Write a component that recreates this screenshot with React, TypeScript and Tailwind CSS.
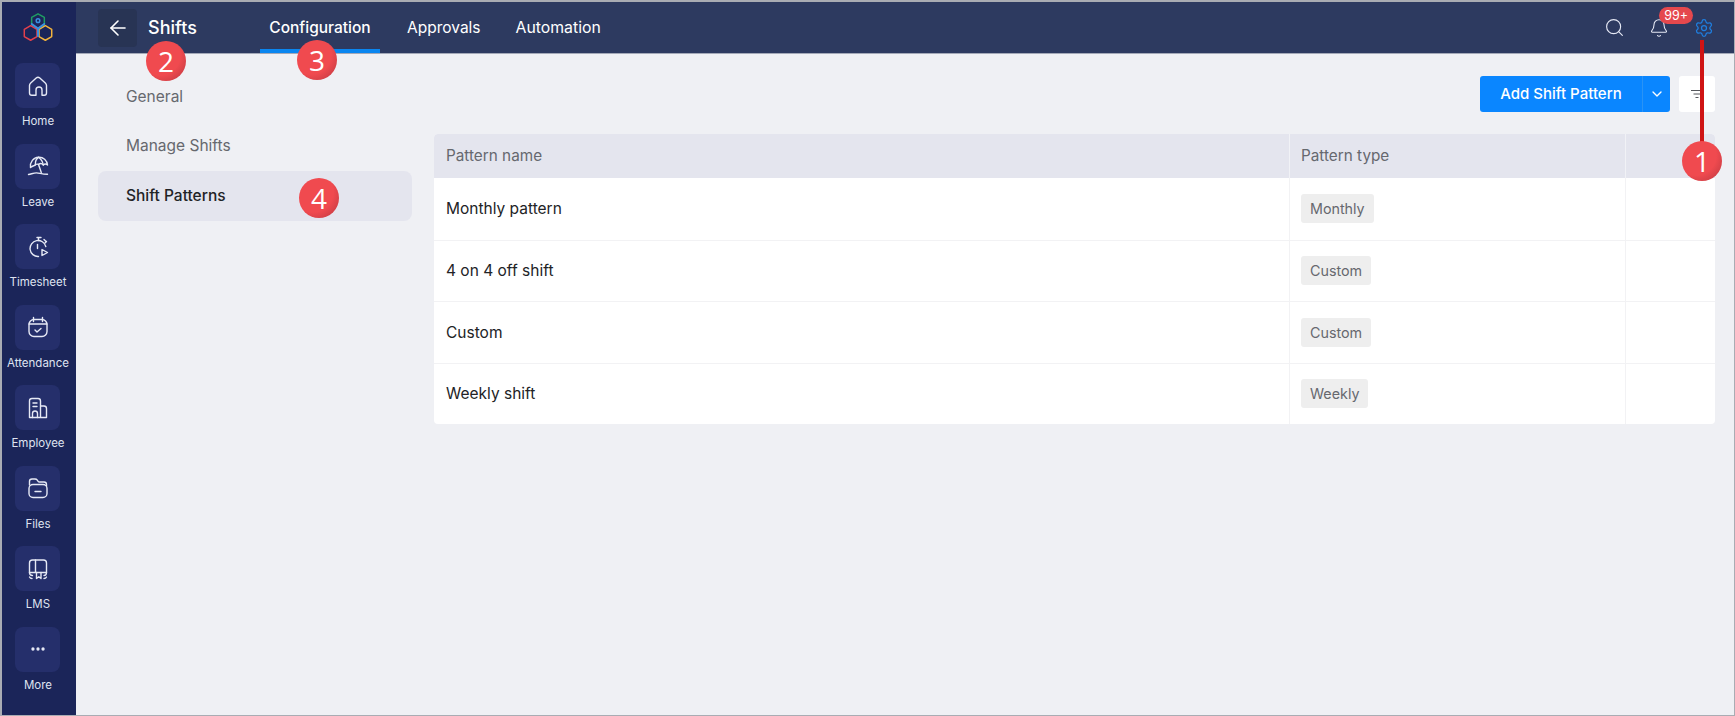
import React from 'react';
import { ArrowLeft, ChevronDown, Search, Bell, Settings } from 'lucide-react';

const font = "font-['Inter','Noto_Sans',sans-serif]";

const Logo = () => (
  <svg width="34" height="34" viewBox="0 0 30 30" fill="none" strokeWidth="1.3" strokeLinejoin="round">
    <path d="M15 2.5l5.6 3.2v6.4L15 15.3l-5.6-3.2V5.700z" stroke="#1f9d63" />
    <path d="M8.500 13l5.600 3.200v6.400l-5.600 3.200-5.600-3.200v-6.400z" stroke="#e5404c" />
    <path d="M21.500 13l5.600 3.200v6.400l-5.600 3.200-5.600-3.200v-6.400z" stroke="#f2b33d" />
    <circle cx="15" cy="8.500" r="1.600" stroke="#3b8fe0" />
    <path d="M9.500 11.500L15 15.500l5.500-4M15 15.500v6.500" stroke="#3b8fe0" strokeWidth="1.800" strokeLinecap="round" />
  </svg>
);

const iconProps = {
  width: 24,
  height: 24,
  viewBox: '0 0 24 24',
  fill: 'none',
  stroke: '#e6e9f5',
  strokeWidth: 1.4,
  strokeLinecap: 'round' as const,
  strokeLinejoin: 'round' as const,
};

const HomeIcon = () => (
  <svg {...iconProps}>
    <path d="M3.500 19V11.500c0-1 .4-1.800 1.200-2.500l5.500-5c1-.9 2.600-.9 3.600 0l5.500 5c.8.7 1.200 1.500 1.200 2.500V19c0 1.400-1 2.300-2.300 2.300h-2.200V16a3 3 0 0 0-6 0v5.300H5.800c-1.300 0-2.300-.9-2.300-2.300z" />
  </svg>
);
const LeaveIcon = () => (
  <svg {...iconProps}>
    <path d="M4.500 13.500C3.800 8 7.500 3.500 12.500 3.200c4.800-.3 8.500 3 9 7.800-1.200-1-3-1.100-4.200 0-1.100-1.300-3.200-1.700-4.700-.6-1.600-.6-3.300-.1-4.300 1.100-1.300.3-2.600 1.100-3.800 2z" />
    <path d="M12.500 3.300c-2.300 1.400-3.400 4.300-3.100 7.800M12.500 10.400l2.800 8M12.500 3.300c2.400 1.700 4.300 4.400 4.800 7.700" />
    <path d="M2.500 20.500c3-.5 5-1.600 8-1.600s5 1.400 11 1.400" />
  </svg>
);
const TimesheetIcon = () => (
  <svg {...iconProps}>
    <path d="M11 2.500h4M12.500 2.500v3M18 4.500l1.800 1.800M19 8l1.500-1.500" />
    <path d="M19.800 11.500a8 8 0 1 0-7.300 10" />
    <path d="M11.500 9.500v4" />
    <path d="M16 14.500v6l5.500-3z" />
  </svg>
);
const AttendanceIcon = () => (
  <svg {...iconProps}>
    <rect x="3" y="4.500" width="18" height="17" rx="5" />
    <path d="M7.500 2.500v4M16.500 2.500v4M3 9h18M9 15l2 2 4-3.500" />
  </svg>
);
const EmployeeIcon = () => (
  <svg {...iconProps}>
    <path d="M3.500 21.500V5c0-1.500 1-2.500 2.500-2.500h6c1.500 0 2.500 1 2.500 2.500v16.500zM14.500 10H18c1.500 0 2.500 1 2.500 2.500v9h-6" />
    <path d="M7 7h4M7 10.500h4M6.500 21.500v-4a2.500 2.500 0 0 1 5 0v4" />
  </svg>
);
const FilesIcon = () => (
  <svg {...iconProps}>
    <path d="M3.500 9V5.500c0-1.500 1-2.500 2.500-2.500h3c1 0 1.700.4 2.300 1.200l.7 1c.4.500.8.800 1.500.800h4.500c1.500 0 2.500 1 2.500 2.500V10" />
    <rect x="3" y="8.500" width="18" height="13" rx="4" />
    <path d="M9 15.500h6" />
  </svg>
);
const LmsIcon = () => (
  <svg {...iconProps}>
    <path d="M6.500 18.500H6a3 3 0 0 1-2.500-3V6c0-2 1.300-3 3-3h11c1.700 0 3 1 3 3v9.500c0 1.500-1 3-2.500 3M3.500 15.500a3 3 0 0 0 3 3" />
    <path d="M9.500 3v12.500M3.500 15.500h17M6 21.500c-1 0-2-.6-2.500-1.500M18 21.500c1 0 2-.6 2.500-1.500" />
    <path d="M10.500 15.500v6l2.300-1.700 2.200 1.700v-6" />
  </svg>
);
const MoreIcon = () => (
  <svg width="22" height="22" viewBox="0 0 24 24" fill="#e6e9f5">
    <circle cx="6.500" cy="12" r="1.800" />
    <circle cx="12" cy="12" r="1.800" />
    <circle cx="17.500" cy="12" r="1.800" />
  </svg>
);

const navItems = [
  { label: 'Home', icon: <HomeIcon /> },
  { label: 'Leave', icon: <LeaveIcon /> },
  { label: 'Timesheet', icon: <TimesheetIcon /> },
  { label: 'Attendance', icon: <AttendanceIcon /> },
  { label: 'Employee', icon: <EmployeeIcon /> },
  { label: 'Files', icon: <FilesIcon /> },
  { label: 'LMS', icon: <LmsIcon /> },
  { label: 'More', icon: <MoreIcon /> },
];

const rows = [
  { name: 'Monthly pattern', type: 'Monthly' },
  { name: '4 on 4 off shift', type: 'Custom' },
  { name: 'Custom', type: 'Custom' },
  { name: 'Weekly shift', type: 'Weekly' },
];

const Callout = ({ n, className }: { n: number; className: string }) => (
  <div
    className={`absolute z-20 flex h-10 w-10 items-center justify-center rounded-full bg-[radial-gradient(circle_at_35%_35%,#f04a4f_55%,#b8373f_100%)] font-['Open_Sans',sans-serif] text-[28px] text-white ${className}`}
  >
    {n}
  </div>
);

const App = () => {
  return (
    <div className={`relative flex h-[716px] w-[1735px] overflow-hidden border-2 border-b border-r border-[#a9acb3] bg-[#eff0f4] ${font}`}>
      {/* Sidebar */}
      <aside className="flex h-full w-[74px] shrink-0 flex-col items-center bg-[#1b2559] pr-[2px]">
        <div className="flex h-[51px] w-full items-center justify-center pt-px">
          <Logo />
        </div>
        <div className="mt-[10px] flex flex-col items-center gap-[8.500px]">
          {navItems.map((item) => (
            <div key={item.label} className="flex h-[72px] w-full flex-col items-center">
              <div className="flex h-[45px] w-[45px] items-center justify-center rounded-[8px] bg-[#252f6b]">
                {item.icon}
              </div>
              <span className="mt-[5px] text-[11.500px] leading-[16px] text-[#dfe3f0]">{item.label}</span>
            </div>
          ))}
        </div>
      </aside>

      <div className="flex min-w-0 flex-1 flex-col">
        {/* Top bar */}
        <header className="flex h-[52px] shrink-0 items-center justify-between border-b border-[#a4a9b8] bg-[#2d3a60] pl-[22px] pr-[20px]">
          <div className="flex h-full items-center">
            <div className="flex h-[38px] w-[39px] items-center justify-center rounded-[4px] bg-[#283454]">
              <ArrowLeft size={24} className="text-white" strokeWidth={1.600} />
            </div>
            <span className="ml-[11px] w-[112px] text-[18px] font-medium text-white">Shifts</span>
            <nav className="flex h-full items-stretch text-[15.500px] leading-[22px] text-white">
              <div className="flex w-[120px] items-center justify-center border-b-[4px] border-[#0a86f0] pt-[4px] font-medium">Configuration</div>
              <div className="ml-[27px] flex items-center">Approvals</div>
              <div className="ml-[35px] flex items-center text-[15.800px]">Automation</div>
            </nav>
          </div>
          <div className="relative flex items-center">
            <Search size={21} className="mr-[24px] text-[#e6e9f5]" strokeWidth={1.300} />
            <Bell size={20} className="mr-[25px] text-[#e6e9f5]" strokeWidth={1.300} />
            <Settings size={20} className="text-[#1f7fe0]" strokeWidth={1.500} />
            <span className="absolute right-[21px] top-[-10px] rounded-full bg-[#e5484d] px-[5px] text-[12.500px] leading-[17px] text-white">99+</span>
          </div>
        </header>

        {/* Content */}
        <div className="flex min-h-0 flex-1 pl-[22px] pr-[19px]">
          <div className="w-[314px] shrink-0 pt-[18px] text-[15.500px]">
            <div className="flex h-[49px] items-center pl-[28px] text-[#66686e]">General</div>
            <div className="flex h-[50px] items-center pl-[28px] text-[#66686e]">Manage Shifts</div>
            <div className="flex h-[50px] items-center rounded-[8px] bg-[#e4e5ee] pl-[28px] font-medium text-[#222326]">Shift Patterns</div>
          </div>

          <div className="ml-[22px] min-w-0 flex-1 pt-[22px]">
            <div className="flex h-[36px] justify-end">
              <div className="flex rounded-[3px] bg-[#0a86ff] text-white">
                <div className="flex w-[162px] items-center justify-center text-[15px] font-medium">Add Shift Pattern</div>
                <div className="flex w-[28px] items-center justify-center border-l border-[#2a93f5]">
                  <ChevronDown size={16} strokeWidth={2} />
                </div>
              </div>
              <div className="ml-[9px] flex w-[36px] items-center justify-center rounded-[3px] bg-white">
                <svg width="14" height="12" viewBox="0 0 14 12" fill="none" stroke="#55575c" strokeWidth="1.200">
                  <path d="M1 2.500h12M3.500 6h7M5.500 9.500h3" />
                </svg>
              </div>
            </div>

            <div className="mt-[22px] overflow-hidden rounded-[4px] bg-white">
              <div className="flex h-[44px] bg-[#e4e5ee] text-[15.300px] text-[#66686e]">
                <div className="flex w-[855px] items-center pl-[12px]">Pattern name</div>
                <div className="flex w-[336px] items-center border-l border-[#f1f2f6] pl-[11px]">Pattern type</div>
                <div className="flex-1 border-l border-[#f1f2f6]" />
              </div>
              {rows.map((row, i) => (
                <div key={i} className={`flex h-[61.500px] ${i > 0 ? 'border-t border-[#f2f2f4]' : ''}`}>
                  <div className="flex w-[855px] items-center pl-[12px] text-[15.500px] text-[#222326]">{row.name}</div>
                  <div className="flex w-[336px] items-center border-l border-[#f2f2f4] pl-[11px]">
                    <span className="rounded-[3px] bg-[#eeeeee] px-[9px] py-[5px] text-[14.300px] leading-[19px] text-[#66686e]">{row.type}</span>
                  </div>
                  <div className="flex-1 border-l border-[#f2f2f4]" />
                </div>
              ))}
            </div>
          </div>
        </div>
      </div>

      {/* Tutorial callouts */}
      <div className="absolute left-[1698px] top-[38px] z-10 h-[102px] w-[4px] bg-[#cf1414]" />
      <Callout n={1} className="left-[1680px] top-[139px]" />
      <Callout n={2} className="left-[144px] top-[39px]" />
      <Callout n={3} className="left-[295px] top-[38px]" />
      <Callout n={4} className="left-[297px] top-[176px]" />
    </div>
  );
};

export default App;
